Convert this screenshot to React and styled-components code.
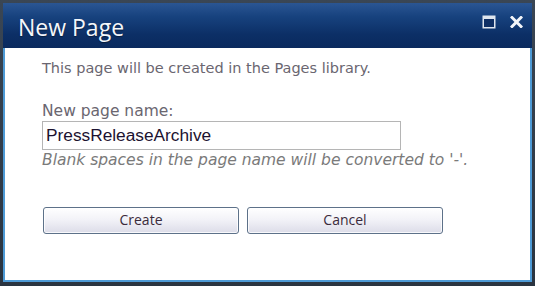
import React from "react";
import styled, { createGlobalStyle } from "styled-components";

const Global = createGlobalStyle`
  html, body { margin: 0; padding: 0; background: #2c3844; }
  body { width: 535px; height: 286px; overflow: hidden; }
  #root { width: 535px; height: 286px; }
`;

const Frame = styled.div`
  box-sizing: border-box;
  width: 535px;
  height: 286px;
  padding: 3px 3px 4px 3px;
  background: linear-gradient(#3a4654, #2a3440);
`;

const Dialog = styled.div`
  box-sizing: border-box;
  height: 100%;
  display: flex;
  flex-direction: column;
  background: #0e3167;
`;

const TitleBar = styled.div`
  height: 45px;
  flex: none;
  display: flex;
  align-items: center;
  justify-content: space-between;
  padding: 0 9px 0 15px;
  background: linear-gradient(#2b5693 0%, #17427e 30%, #0c2f66 70%, #0a2a5e 100%);
`;

const Title = styled.h1`
  margin: 0;
  font-family: "Open Sans", "Noto Sans", sans-serif;
  font-weight: 400;
  font-size: 23px;
  color: #f4f7fb;
  text-shadow: 0 1px 1px rgba(0, 0, 0, 0.4);
  position: relative;
  top: 1px;
`;

const Controls = styled.div`
  align-self: flex-start;
  margin-top: 12px;
  display: flex;
  align-items: flex-start;
  gap: 14px;
`;

const Body = styled.div`
  flex: 1;
  background: #ffffff;
  border: 2px solid #4d9ad6;
  border-top: none;
  padding: 10px 0 0 37px;
  display: flex;
  flex-direction: column;
  font-family: "DejaVu Sans", Verdana, sans-serif;
`;

const Intro = styled.p`
  margin: 0;
  font-size: 14.5px;
  color: #6a6670;
  line-height: 20px;
`;

const Label = styled.div`
  margin-top: 25px;
  font-size: 15.5px;
  color: #6a6670;
  line-height: 17px;
`;

const Input = styled.input`
  box-sizing: border-box;
  margin-top: 1px;
  width: 359px;
  height: 29px;
  border: 1px solid #b5b5b5;
  padding: 0 0 0 3px;
  font-family: "Liberation Sans", Arial, sans-serif;
  font-size: 17.3px;
  color: #1c1230;
  outline: none;
`;

const Hint = styled.div`
  margin-top: 1px;
  font-size: 15.5px;
  font-style: italic;
  color: #7a7a7a;
  line-height: 18px;
`;

const ButtonRow = styled.div`
  display: flex;
  gap: 8px;
  margin-top: 38px;
  padding-left: 1px;
`;

const Button = styled.button`
  box-sizing: border-box;
  width: 196px;
  height: 27px;
  border: 1px solid #5d7189;
  border-radius: 3px;
  background: linear-gradient(#ffffff 0%, #f3f3f8 45%, #dcdce8 100%);
  box-shadow: inset 0 0 0 1px rgba(255, 255, 255, 0.8);
  font-family: "Open Sans", "Noto Sans", sans-serif;
  font-size: 14px;
  color: #3b2b3c;
  padding: 0 0 2px 0;
  cursor: pointer;
`;

const MaxIcon = () => (
  <svg width="14" height="14" viewBox="0 0 14 14">
    <rect x="0.5" y="0.5" width="13" height="13" fill="#dfe6ee" />
    <rect x="2" y="4" width="10" height="8" fill="#0f2f64" />
  </svg>
);

const CloseIcon = () => (
  <svg width="13" height="12" viewBox="0 0 13 12" style={{ marginTop: 1 }}>
    <path d="M2 1.5 L11 10.5 M11 1.5 L2 10.5" stroke="#f2f5f9" strokeWidth="3" strokeLinecap="square" />
  </svg>
);

export default function App() {
  return (
    <>
      <Global />
      <Frame>
        <Dialog>
          <TitleBar>
            <Title>New Page</Title>
            <Controls>
              <MaxIcon />
              <CloseIcon />
            </Controls>
          </TitleBar>
          <Body>
            <Intro>This page will be created in the Pages library.</Intro>
            <Label>New page name:</Label>
            <Input defaultValue="PressReleaseArchive" />
            <Hint>Blank spaces in the page name will be converted to '-'.</Hint>
            <ButtonRow>
              <Button>Create</Button>
              <Button>Cancel</Button>
            </ButtonRow>
          </Body>
        </Dialog>
      </Frame>
    </>
  );
}
